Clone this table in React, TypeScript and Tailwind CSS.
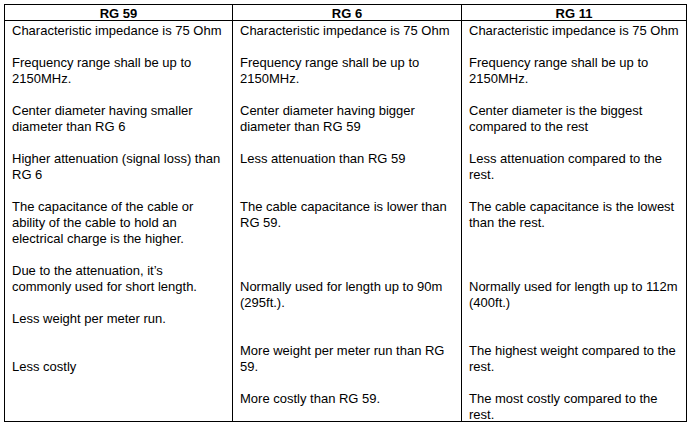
type Para = { lines: string[]; gap: string };

const columns: { title: string; paras: Para[] }[] = [
  {
    title: "RG 59",
    paras: [
      { lines: ["Characteristic impedance is 75 Ohm"], gap: "" },
      { lines: ["Frequency range shall be up to", "2150MHz."], gap: "mt-4" },
      { lines: ["Center diameter having smaller", "diameter than RG 6"], gap: "mt-4" },
      { lines: ["Higher attenuation (signal loss) than", "RG 6"], gap: "mt-4" },
      {
        lines: [
          "The capacitance of the cable or",
          "ability of the cable to hold an",
          "electrical charge is the higher.",
        ],
        gap: "mt-4",
      },
      { lines: ["Due to the attenuation, it\u2019s", "commonly used for short length."], gap: "mt-4" },
      { lines: ["Less weight per meter run."], gap: "mt-4" },
      { lines: ["Less costly"], gap: "mt-8" },
    ],
  },
  {
    title: "RG 6",
    paras: [
      { lines: ["Characteristic impedance is 75 Ohm"], gap: "" },
      { lines: ["Frequency range shall be up to", "2150MHz."], gap: "mt-4" },
      { lines: ["Center diameter having bigger", "diameter than RG 59"], gap: "mt-4" },
      { lines: ["Less attenuation than RG 59"], gap: "mt-4" },
      { lines: ["The cable capacitance is lower than", "RG 59."], gap: "mt-8" },
      { lines: ["Normally used for length up to 90m", "(295ft.)."], gap: "mt-12" },
      { lines: ["More weight per meter run than RG", "59."], gap: "mt-8" },
      { lines: ["More costly than RG 59."], gap: "mt-4" },
    ],
  },
  {
    title: "RG 11",
    paras: [
      { lines: ["Characteristic impedance is 75 Ohm"], gap: "" },
      { lines: ["Frequency range shall be up to", "2150MHz."], gap: "mt-4" },
      { lines: ["Center diameter is the biggest", "compared to the rest"], gap: "mt-4" },
      { lines: ["Less attenuation compared to the", "rest."], gap: "mt-4" },
      { lines: ["The cable capacitance is the lowest", "than the rest."], gap: "mt-4" },
      { lines: ["Normally used for length up to 112m", "(400ft.)"], gap: "mt-12" },
      { lines: ["The highest weight compared to the", "rest."], gap: "mt-8" },
      { lines: ["The most costly compared to the", "rest."], gap: "mt-4" },
    ],
  },
];

const widths = ["w-[228px] border-r", "w-[229px] border-r", "flex-1"];

export default function App() {
  return (
    <div className="w-[696px] h-[428px] bg-white p-[4px] font-['Liberation_Sans',Arial,sans-serif] text-[13px] leading-4 text-black">
      <div className="flex w-[683px] h-[418px] border border-black">
        {columns.map((col, i) => (
          <div key={col.title} className={`${widths[i]} flex flex-col border-black`}>
            <div className="h-[16px] border-b border-black text-center font-bold leading-[17px]">
              {col.title}
            </div>
            <div className="px-[7px] pt-[2px]">
              {col.paras.map((p, j) => (
                <p key={j} className={`${p.gap} whitespace-nowrap`}>
                  {p.lines.map((l, k) => (
                    <span key={k} className="block">
                      {l}
                    </span>
                  ))}
                </p>
              ))}
            </div>
          </div>
        ))}
      </div>
    </div>
  );
}
